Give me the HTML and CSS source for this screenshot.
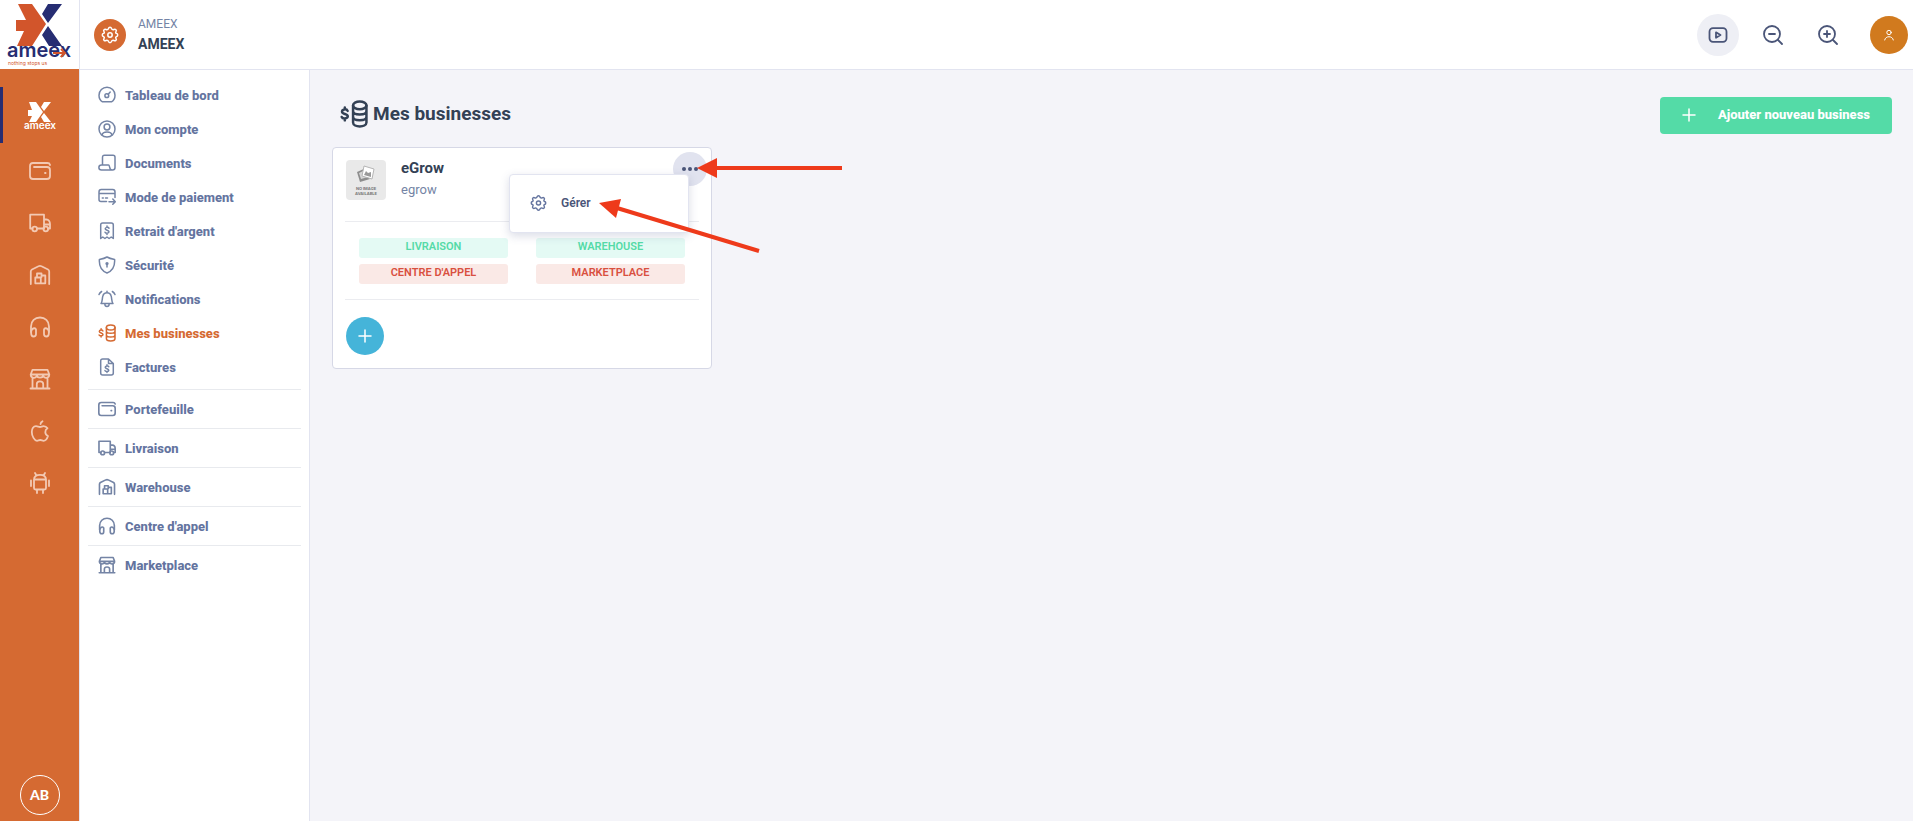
FILE: index.html
```html
<!DOCTYPE html>
<html lang="fr">
<head>
  <meta charset="UTF-8" />
  <meta name="viewport" content="width=device-width, initial-scale=1.0" />
  <title>AMEEX - Mes businesses</title>
  <link rel="stylesheet" href="styles.css">
</head>
<body>
  <!-- Icons -->
  <svg class="sprite" aria-hidden="true">
    <symbol id="gear" viewBox="0 0 18 18">
      <path d="M7.4 2.6C7.9.9 10.1.9 10.6 2.6C10.9 3.6 12 4 12.9 3.5C14.5 2.7 16 4.2 15 5.6C14.5 6.5 14.6 7 15.5 7.4C17.1 7.9 17.1 10.1 15.5 10.6C14.6 11 14.5 11.6 15 12.4C16 13.9 14.5 15.4 12.9 14.5C12 14 10.9 14.4 10.6 15.4C10.1 17.1 7.9 17.1 7.4 15.4C7.1 14.4 6 14 5.1 14.5C3.5 15.4 2 13.9 3 12.4C3.5 11.6 3.4 11 2.5 10.6C.9 10.1.9 7.9 2.5 7.4C3.4 7 3.5 6.5 3 5.6C2 4.2 3.5 2.7 5.1 3.5C6 4 7.1 3.6 7.4 2.6Z"/>
      <circle cx="9" cy="9" r="2.2"/>
    </symbol>
    <symbol id="gauge" viewBox="0 0 18 18">
      <path d="M4.5 15.8C2.3 14.5 1 12 1 9.2C1 4.7 4.6 1.2 9 1.2S17 4.7 17 9.2C17 12 15.7 14.5 13.5 15.8Z"/>
      <circle cx="8.8" cy="9.7" r="1.9"/><path d="M10.2 8.3L12.2 6"/>
    </symbol>
    <symbol id="account" viewBox="0 0 18 18">
      <circle cx="9" cy="9" r="8"/><circle cx="9" cy="7" r="2.9"/>
      <path d="M4 15C4.4 12.8 6.4 11.9 9 11.9S13.6 12.8 14 15"/>
    </symbol>
    <symbol id="scroll" viewBox="0 0 18 18">
      <path d="M4.5 11V3.5C4.5 2 5 1.3 6.5 1.3H15C16.3 1.3 17 2 17 3.3V13.5C17 15.3 16.2 16 14.5 16H3.5C0 16 0 11 3.5 11H10.5C12 11 11 16 14 16"/>
    </symbol>
    <symbol id="card" viewBox="0 0 18 18">
      <path d="M8.5 13.5H3C1.7 13.5 1 12.8 1 11.5V4C1 2.5 1.8 1.6 3.3 1.6H14.7C16.2 1.6 17 2.5 17 4V9.5M1 5.5H17M4.3 10H5.3M7.5 10H9.5M11 13.7H17M14.8 11L17.3 13.7L14.8 16.3"/>
    </symbol>
    <symbol id="receipt" viewBox="0 0 18 18">
      <path d="M2.7 16.5V3C2.7 1.6 3.3 1 4.7 1H13.3C14.7 1 15.3 1.6 15.3 3V16.5L13.2 15L11.1 16.5L9 15L6.9 16.5L4.8 15Z"/>
      <path d="M11 6.2C10.6 5 7.2 5 7.2 6.8C7.2 8.6 11 8 11 9.8C11 11.6 7.2 11.4 7 10.2M9 4V5.3M9 11.2V12.5"/>
    </symbol>
    <symbol id="shield" viewBox="0 0 18 18">
      <path d="M9 1C6.7 2.5 4 3 1.4 3.4C1 9 2.3 14.5 9 17C15.7 14.5 17 9 16.6 3.4C14 3 11.3 2.5 9 1Z"/>
      <circle cx="9" cy="7.6" r=".9"/><path d="M9 8.5V11"/>
    </symbol>
    <symbol id="bell" viewBox="0 0 18 18">
      <path d="M3 13.5C4.6 11.8 4 8.5 4.9 5.8C5.5 3.7 7 2.8 9 2.8S12.5 3.7 13.1 5.8C14 8.5 13.4 11.8 15 13.5ZM9 2.8V1.2M6.8 14C7 17.3 11 17.3 11.2 14M3.6 1.5C2.5 2.2 1.5 3.3 1 4.6M14.4 1.5C15.5 2.2 16.5 3.3 17 4.6"/>
    </symbol>
    <symbol id="coins" viewBox="0 0 18 18">
      <ellipse cx="12.7" cy="3.5" rx="4.3" ry="2.5"/>
      <path d="M8.4 3.5V14.5C8.4 17.8 17 17.8 17 14.5V3.5M8.4 7C8.4 10 17 10 17 7M8.4 10.7C8.4 13.7 17 13.7 17 10.7"/>
      <path d="M4.9 7C4.3 5.5 1.3 5.8 1.3 7.5C1.3 9.3 5 8.7 5 10.5C5 12.2 1.6 12.2 1.1 10.9M3.1 4.8V6M3.1 12V13.1"/>
    </symbol>
    <symbol id="invoice" viewBox="0 0 18 18">
      <path d="M10.5 1H4.7C3.3 1 2.7 1.7 2.7 3V15C2.7 16.4 3.3 17 4.7 17H13.3C14.7 17 15.3 16.4 15.3 15V5.5ZM10.5 1V5.5H15.3"/>
      <path d="M10.8 8.7C10.4 7.6 7.2 7.6 7.2 9.3C7.2 11 10.8 10.4 10.8 12.2C10.8 13.9 7.2 13.7 7 12.6M9 6.8V8M9 13.4V14.6"/>
    </symbol>
    <symbol id="wallet" viewBox="0 0 22 22">
      <path d="M21 5V4.8C20.6 3.5 20 3 18.5 3H4C2 3 1 4 1 6V16C1 18 2 19 4 19H18C20 19 21 18 21 16V10C21 8 20 7 18 7H5"/><path d="M16 13H16.6"/>
    </symbol>
    <symbol id="truck" viewBox="0 0 22 22">
      <path d="M3.5 16.5H1.2V2.7H15V16.5H8M15 7.5H17.5C19.5 7.5 21 9.5 21 12V16.5H19M15 12.5H20.8"/>
      <circle cx="5.7" cy="17" r="2.3"/><circle cx="16.8" cy="17" r="2.3"/>
    </symbol>
    <symbol id="warehouse" viewBox="0 0 22 22">
      <path d="M1.8 20V7.5C1.8 6.5 2.2 6 3 5.5L9.5 2.3C10.6 1.8 11.4 1.8 12.5 2.3L19 5.5C19.8 6 20.2 6.5 20.2 7.5V20M6.3 19.3V13.5H11.8V19.3ZM8 13.5V9.5H12.5V13M11.8 19.3H16.3V11.5H12.5"/>
    </symbol>
    <symbol id="headphones" viewBox="0 0 22 22">
      <path d="M2 16V10.5C2 5 6 1.5 11 1.5S20 5 20 10.5V16"/>
      <path d="M7 13.5C6.5 11.8 4.5 12 3.5 13C1.5 14.5 1.5 20.5 4.5 20.5C6.5 20.5 7 19.5 7 18ZM15 13.5C15.5 11.8 17.5 12 18.5 13C20.5 14.5 20.5 20.5 17.5 20.5C15.5 20.5 15 19.5 15 18Z"/>
    </symbol>
    <symbol id="store" viewBox="0 0 22 22">
      <path d="M1.5 20.5H20.5M3.5 10V20.5M18.5 10V20.5M3.5 1.8H18.5L20.3 6.5H1.7ZM1.7 6.5C1.7 10.8 7.8 10.8 7.8 7C7.8 10.5 14.2 10.5 14.2 7C14.2 10.8 20.3 10.8 20.3 6.5M7.8 20.5V16C7.8 12.5 14.2 12.5 14.2 16V20.5"/>
    </symbol>
    <symbol id="apple" viewBox="0 0 22 22">
      <path d="M11 7C9.5 7 8.8 6.2 7 6.2C4.5 6.2 2.8 8.5 2.8 12C2.8 16 5.5 20.8 8 20.8C9.3 20.8 9.8 20 11.2 20S13.3 20.8 14.5 20.8C16.5 20.8 18.2 18.5 19 16C15.5 14.5 15.5 10 18.5 8.3C17.5 6.8 16 6.2 14.5 6.2C13 6.2 12.5 7 11 7ZM11.5 4C11.7 2.7 12.3 1.8 13.5 1.3"/>
    </symbol>
    <symbol id="android" viewBox="0 0 22 22">
      <path d="M5 7.5V16C5 17 5.5 17.5 6.5 17.5H15.5C16.5 17.5 17 17 17 16V7.5ZM5 7.5C5 4.5 7.5 2.8 11 2.8S17 4.5 17 7.5M7.5 3.5L6 1M14.5 3.5L16 1M2 8.5V14M20 8.5V14M8 17.5V21M14 17.5V21"/>
    </symbol>
    <symbol id="plus" viewBox="0 0 18 18"><path d="M9 3V15M3 9H15"/></symbol>
  </svg>

  <!-- Left rail -->
  <aside class="rail">
    <a class="brand" href="#" aria-label="Ameex">
      <svg class="brand-logo" viewBox="0 0 80 58">
        <path class="logo-a" d="M18 4H32L46 24L32 46H17L24 31H16V20H26Z"/>
        <path class="logo-b" d="M48 4H62L48 23L42 14ZM48 26L62 46H49L42 35Z"/>
        <text class="logo-b logo-text" x="7" y="57">ameex</text>
        <path class="logo-tail" d="M53 53H65M61 49L65 53L61 57"/>
      </svg>
      <span class="brand-tagline">nothing stops us</span>
    </a>
    <nav class="rail-nav" aria-label="Applications">
      <a class="rail-link active" href="#" aria-label="Ameex">
        <svg class="rail-logo" viewBox="0 0 40 30">
          <path class="logo-a" d="M9 2H16L23 12L16 22H9L12 16H8V10H12Z"/>
          <path class="logo-b" d="M24 2H31L24 11L21 7ZM24 13L31 22H24L21 17Z"/>
          <text class="logo-b logo-text" x="4" y="29">ameex</text>
        </svg>
      </a>
      <a class="rail-link" href="#" aria-label="Portefeuille"><svg class="icon"><use href="#wallet"/></svg></a>
      <a class="rail-link" href="#" aria-label="Livraison"><svg class="icon"><use href="#truck"/></svg></a>
      <a class="rail-link" href="#" aria-label="Warehouse"><svg class="icon"><use href="#warehouse"/></svg></a>
      <a class="rail-link" href="#" aria-label="Centre d'appel"><svg class="icon"><use href="#headphones"/></svg></a>
      <a class="rail-link" href="#" aria-label="Marketplace"><svg class="icon"><use href="#store"/></svg></a>
      <a class="rail-link" href="#" aria-label="iOS"><svg class="icon"><use href="#apple"/></svg></a>
      <a class="rail-link" href="#" aria-label="Android"><svg class="icon"><use href="#android"/></svg></a>
    </nav>
    <button class="rail-user">AB</button>
  </aside>

  <div class="page">
    <!-- Top bar -->
    <header class="topbar">
      <span class="topbar-icon"><svg class="icon"><use href="#gear"/></svg></span>
      <div class="topbar-name">
        <span>AMEEX</span>
        <strong>AMEEX</strong>
      </div>
      <div class="topbar-actions">
        <button class="round-btn filled" aria-label="Tutoriel">
          <svg class="icon" viewBox="0 0 20 20"><rect x="1.5" y="3.2" width="17" height="13.6" rx="3.5"/><path d="M8 7.3L12.5 10L8 12.7Z"/></svg>
        </button>
        <button class="round-btn" aria-label="Zoom arrière">
          <svg class="icon" viewBox="0 0 20 20"><circle cx="9" cy="9" r="8"/><path d="M15 15L19 19M6 9H12"/></svg>
        </button>
        <button class="round-btn" aria-label="Zoom avant">
          <svg class="icon" viewBox="0 0 20 20"><circle cx="9" cy="9" r="8"/><path d="M15 15L19 19M6 9H12M9 6V12"/></svg>
        </button>
        <button class="avatar" aria-label="Profil">
          <svg class="icon" viewBox="0 0 12 12"><circle cx="6" cy="3.5" r="2.2"/><path d="M1.7 11C2.3 6.5 9.7 6.5 10.3 11"/></svg>
        </button>
      </div>
    </header>

    <div class="body">
      <!-- Side menu -->
      <nav class="menu" aria-label="Menu">
        <ul class="menu-list">
          <li><a href="#"><svg class="icon"><use href="#gauge"/></svg>Tableau de bord</a></li>
          <li><a href="#"><svg class="icon"><use href="#account"/></svg>Mon compte</a></li>
          <li><a href="#"><svg class="icon"><use href="#scroll"/></svg>Documents</a></li>
          <li><a href="#"><svg class="icon"><use href="#card"/></svg>Mode de paiement</a></li>
          <li><a href="#"><svg class="icon"><use href="#receipt"/></svg>Retrait d'argent</a></li>
          <li><a href="#"><svg class="icon"><use href="#shield"/></svg>Sécurité</a></li>
          <li><a href="#"><svg class="icon"><use href="#bell"/></svg>Notifications</a></li>
          <li><a class="active" href="#"><svg class="icon"><use href="#coins"/></svg>Mes businesses</a></li>
          <li><a href="#"><svg class="icon"><use href="#invoice"/></svg>Factures</a></li>
        </ul>
        <ul class="menu-list sections">
          <li><a href="#"><svg class="icon"><use href="#wallet"/></svg>Portefeuille</a></li>
          <li><a href="#"><svg class="icon"><use href="#truck"/></svg>Livraison</a></li>
          <li><a href="#"><svg class="icon"><use href="#warehouse"/></svg>Warehouse</a></li>
          <li><a href="#"><svg class="icon"><use href="#headphones"/></svg>Centre d'appel</a></li>
          <li><a href="#"><svg class="icon"><use href="#store"/></svg>Marketplace</a></li>
        </ul>
      </nav>

      <main class="content">
        <div class="content-head">
          <h1><svg class="icon"><use href="#coins"/></svg>Mes businesses</h1>
          <button class="add-btn"><svg class="icon"><use href="#plus"/></svg>Ajouter nouveau business</button>
        </div>

        <!-- Business card -->
        <article class="card">
          <div class="card-head">
            <div class="thumb">
              <svg class="thumb-photo" viewBox="0 0 20 18">
                <path fill="#8d8d8d" d="M1 7L10 3L14 14L4 17Z"/>
                <path fill="#d5d5d5" d="M3 8L9 5L12 12L5 14Z"/>
                <path fill="#fff" stroke="#b5b5b5" d="M8 1L18 4L16 14L6 11Z"/>
                <path fill="#999" d="M8 10L10 6L12 8L15 7L15 12Z"/>
              </svg>
              <span>NO IMAGE<br>AVAILABLE</span>
            </div>
            <div class="card-name">
              <h2>eGrow</h2>
              <p>egrow</p>
            </div>
            <button class="more-btn" aria-label="Options"><svg viewBox="0 0 16 4"><circle cx="2" cy="2" r="2"/><circle cx="8" cy="2" r="2"/><circle cx="14" cy="2" r="2"/></svg></button>
          </div>
          <div class="tags">
            <span class="tag on">LIVRAISON</span>
            <span class="tag on">WAREHOUSE</span>
            <span class="tag off">CENTRE D'APPEL</span>
            <span class="tag off">MARKETPLACE</span>
          </div>
          <div class="card-foot">
            <button class="plus-btn" aria-label="Ajouter"><svg class="icon"><use href="#plus"/></svg></button>
          </div>

          <!-- Options menu -->
          <div class="dropdown">
            <a href="#"><svg class="icon"><use href="#gear"/></svg>Gérer</a>
          </div>

          <!-- Pointer arrows -->
          <svg class="arrows" viewBox="0 0 250 100" aria-hidden="true">
            <path class="head" d="M105 16L125 6V26Z"/><path class="line" d="M124 16H250"/>
            <path class="head" d="M7 51L29 47L24 66Z"/><path class="line" d="M25 56L167 99"/>
          </svg>
        </article>
      </main>
    </div>
  </div>
</body>
</html>
```
FILE: styles.css
```css
* { box-sizing: border-box; }
body { margin: 0; min-height: 100vh; display: flex; font-family: Roboto, sans-serif; font-size: 13px; color: #334155; background: #f4f4f9; }
a { color: inherit; text-decoration: none; }
button { font: inherit; border: none; padding: 0; background: none; color: inherit; cursor: pointer; }
ul, h1, h2, p { margin: 0; padding: 0; }
ul { list-style: none; }
.sprite { position: absolute; width: 0; height: 0; }
.icon { width: 18px; height: 18px; flex: none; fill: none; stroke: currentColor; stroke-width: 1.5; stroke-linecap: round; stroke-linejoin: round; }

/* Logo */
.logo-a { fill: #d2552b; }
.logo-b { fill: #262d72; }
.logo-text { font-family: Inter, sans-serif; font-weight: 600; font-size: 20px; }
.logo-tail { fill: none; stroke: #d2552b; stroke-width: 2; }

/* Rail */
.rail { width: 80px; flex: none; display: flex; flex-direction: column; align-items: center; background: #d56a32; border-right: 1px solid #e2e4f0; }
.brand { width: 100%; height: 69px; background: #fff; }
.brand-logo { display: block; width: 80px; height: 58px; overflow: visible; }
.brand-tagline { display: block; padding: 1px 0 0 8px; font: 5px/8px Inter, sans-serif; color: #d2552b; }
.rail-nav { width: 100%; display: flex; flex-direction: column; padding-top: 18px; }
.rail-link { height: 52px; display: flex; align-items: center; justify-content: center; color: #f3c9b3; }
.rail-link .icon { width: 22px; height: 22px; stroke-width: 1.8; }
.rail-link.active { height: 56px; margin-bottom: 2px; border-left: 3px solid #262d72; padding-right: 3px; }
.rail-logo { width: 40px; height: 30px; overflow: visible; }
.rail-logo .logo-a, .rail-logo .logo-b { fill: #fff; }
.rail-logo .logo-text { font-size: 10px; }
.rail-user { width: 40px; height: 40px; margin-top: auto; margin-bottom: 6px; padding-bottom: 2px; border: 1px solid #fff; border-radius: 50%; color: #fff; font: 900 14px Lato, sans-serif; }

/* Top bar */
.page { flex: 1; min-width: 0; display: flex; flex-direction: column; }
.topbar { height: 70px; display: flex; align-items: center; padding: 0 5px 0 14px; background: #fff; border-bottom: 1px solid #e2e4f0; }
.topbar-icon { width: 32px; height: 32px; display: flex; align-items: center; justify-content: center; border-radius: 50%; background: #d56a32; color: #fff; }
.topbar-name { display: flex; flex-direction: column; margin-left: 12px; padding-bottom: 2px; line-height: 20px; }
.topbar-name span { font-size: 12px; color: #7484a5; }
.topbar-name strong { font-size: 14px; font-weight: 700; }
.topbar-actions { display: flex; align-items: center; gap: 13px; margin-left: auto; color: #4a5578; }
.topbar-actions .icon { width: 20px; height: 20px; stroke-width: 1.8; }
.round-btn { width: 42px; height: 42px; display: flex; align-items: center; justify-content: center; border-radius: 50%; }
.round-btn.filled { background: #eeeff5; }
.avatar { width: 38px; height: 38px; margin-left: 8px; display: flex; align-items: center; justify-content: center; border-radius: 50%; background: #d17a1e; color: #fff; }
.topbar-actions .avatar .icon { width: 12px; height: 12px; stroke-width: 1; }

/* Side menu */
.body { flex: 1; display: flex; }
.menu { width: 230px; flex: none; padding: 8px 8px 0; background: #fff; border-right: 1px solid #e2e4f0; color: #64749f; font-weight: 800; }
.menu-list a { height: 34px; display: flex; align-items: center; gap: 9px; padding-left: 10px; }
.menu-list .icon { color: #7484a5; }
.menu-list .active, .menu-list .active .icon { color: #d56a32; }
.sections { padding-top: 5px; }
.sections li { border-top: 1px solid #e8eaee; padding: 2px 0; }
.sections .icon { stroke-width: 2; }

/* Content */
.content { flex: 1; padding: 27px 21px 20px 22px; }
.content-head { display: flex; align-items: center; justify-content: space-between; }
.content-head h1 { display: flex; align-items: center; gap: 5px; padding: 0 0 4px 8px; font-size: 19px; font-weight: 700; }
.content-head h1 .icon { width: 28px; height: 28px; stroke-width: 1.6; }
.add-btn { height: 37px; display: flex; align-items: center; gap: 20px; padding: 0 22px 2px 20px; border-radius: 4px; background: #54dba7; color: #fff; font-size: 13px; font-weight: 800; }

/* Business card */
.card { position: relative; width: 380px; margin-top: 13px; padding: 0 12px; background: #fff; border: 1px solid #d6d8e6; border-radius: 4px; }
.card-head { display: flex; gap: 15px; padding: 12px 0 21px 1px; border-bottom: 1px solid #ebecf0; }
.thumb { width: 40px; height: 40px; display: flex; flex-direction: column; align-items: center; padding-top: 5px; border-radius: 4px; background: #e9e9e9; }
.thumb-photo { width: 20px; height: 18px; }
.thumb span { margin-top: 3px; font: 700 4px/5px Inter, sans-serif; color: #777; text-align: center; }
.card-name h2 { font-size: 15px; line-height: 16px; font-weight: 700; }
.card-name p { font-size: 13px; line-height: 28px; height: 24px; color: #7484a5; }
.more-btn { width: 34px; height: 34px; margin: -8px -8px 0 auto; border-radius: 50%; background: #e1e3ef; }
.more-btn svg { width: 16px; height: 4px; fill: #4a5578; display: block; margin: auto; }
.tags { display: grid; grid-template-columns: 1fr 1fr; gap: 6px 28px; padding: 16px 14px 15px; border-bottom: 1px solid #ebecf0; }
.tag { height: 20px; border-radius: 3px; text-align: center; font-size: 11px; line-height: 18px; font-weight: 600; }
.tag.on { background: #e4faf4; color: #54dba7; }
.tag.off { background: #fae9e6; color: #d9503f; }
.card-foot { padding: 17px 0 13px 1px; }
.plus-btn { width: 38px; height: 38px; display: flex; align-items: center; justify-content: center; border-radius: 50%; background: #45b4d9; color: #fff; }

/* Options menu */
.dropdown { position: absolute; top: 26px; right: 22px; width: 180px; padding: 11px 20px 12px; background: #fff; border: 1px solid #e2e4f0; border-radius: 4px; box-shadow: 0 3px 10px rgba(70,80,130,0.2); }
.dropdown a { display: flex; align-items: center; gap: 14px; height: 34px; font-size: 12px; font-weight: 600; color: #4a5578; }
.dropdown .icon { width: 17px; color: #64749f; }

.arrows { position: absolute; left: 259px; top: 4px; width: 250px; height: 100px; pointer-events: none; overflow: visible; }
.arrows .head { fill: #ee3a1b; }
.arrows .line { fill: none; stroke: #ee3a1b; stroke-width: 4; }
```
